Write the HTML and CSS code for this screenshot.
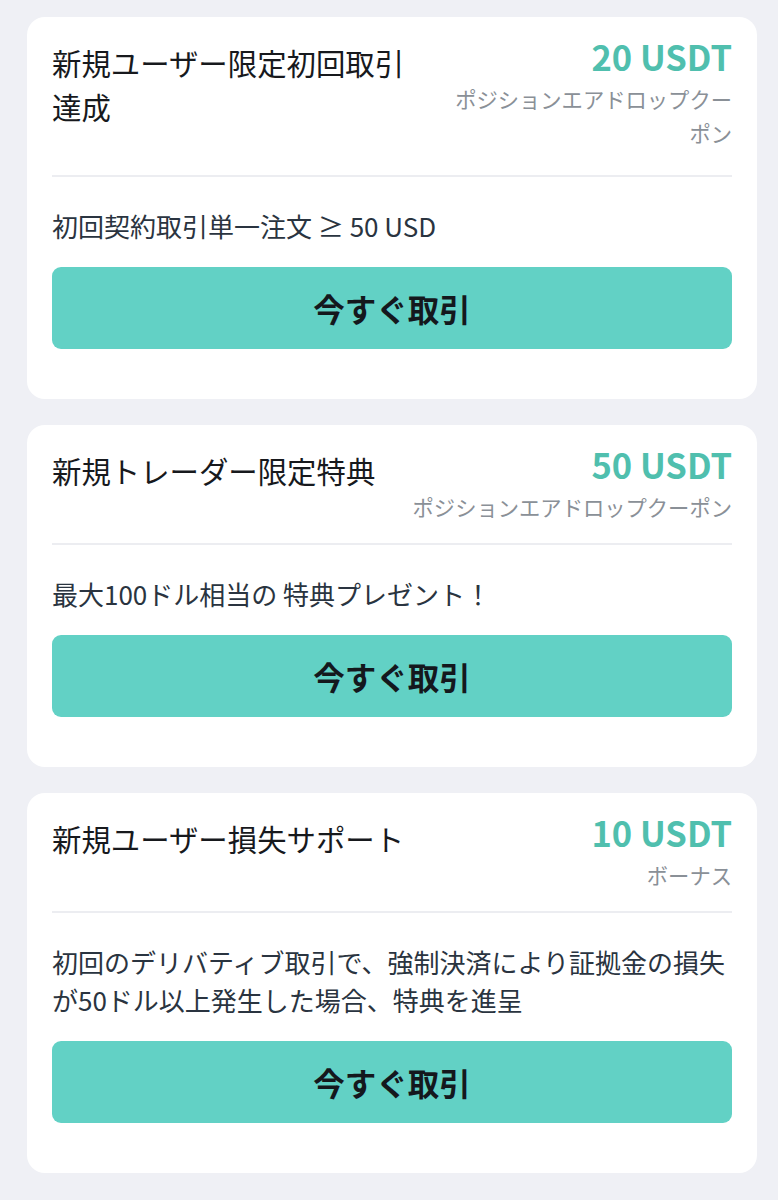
FILE: index.html
```html
<!DOCTYPE html>
<html lang="ja">
<head>
    <meta charset="UTF-8">
    <title>新規ユーザー特典</title>
    <meta name="viewport" content="width=device-width, initial-scale=1.0">
    <link rel="stylesheet" href="styles.css">
</head>
<body>
    <div class="reward-list">
        <div class="reward-card">
            <div class="reward-head reward-head--tall">
                <h2 class="reward-title">新規ユーザー限定初回取引達成</h2>
                <div class="reward-prize">
                    <div class="reward-amount">20 USDT</div>
                    <div class="reward-type">ポジションエアドロップクーポン</div>
                </div>
            </div>
            <p class="reward-desc">初回契約取引単一注文 ≥ 50 USD</p>
            <button class="trade-button">今すぐ取引</button>
        </div>

        <div class="reward-card">
            <div class="reward-head">
                <h2 class="reward-title">新規トレーダー限定特典</h2>
                <div class="reward-prize">
                    <div class="reward-amount">50 USDT</div>
                    <div class="reward-type">ポジションエアドロップクーポン</div>
                </div>
            </div>
            <p class="reward-desc">最大100ドル相当の 特典プレゼント！</p>
            <button class="trade-button">今すぐ取引</button>
        </div>

        <div class="reward-card">
            <div class="reward-head">
                <h2 class="reward-title">新規ユーザー損失サポート</h2>
                <div class="reward-prize">
                    <div class="reward-amount">10 USDT</div>
                    <div class="reward-type">ボーナス</div>
                </div>
            </div>
            <p class="reward-desc">初回のデリバティブ取引で、強制決済により証拠金の損失が50ドル以上発生した場合、特典を進呈</p>
            <button class="trade-button">今すぐ取引</button>
        </div>
    </div>
</body>
</html>
```

FILE: styles.css
```css
body {
    margin: 0;
    padding: 0;
    background-color: #eff0f5;
    font-family: "Noto Sans CJK JP", "Noto Sans", sans-serif;
}

.reward-list {
    display: flex;
    flex-direction: column;
    gap: 26px;
    padding: 17px 21px 20px 27px;
}

.reward-card {
    background: #ffffff;
    border-radius: 18px;
    padding: 16px 25px 50px;
}

.reward-head {
    display: flex;
    align-items: flex-start;
    gap: 20px;
    padding-bottom: 19px;
    border-bottom: 2px solid #ecedf1;
}

.reward-head--tall {
    padding-bottom: 25px;
}

.reward-title {
    flex: 1 1 auto;
    margin: 7px 0 0;
    font-size: 29.4px;
    line-height: 44px;
    font-weight: 400;
    color: #17191d;
}

.reward-prize {
    flex: 1 1 auto;
    text-align: right;
}

.reward-amount {
    font-size: 34.5px;
    line-height: 46px;
    font-weight: 700;
    color: #50bfae;
    white-space: nowrap;
}

.reward-type {
    margin-top: 3px;
    font-size: 21.3px;
    line-height: 34px;
    color: #8a9097;
}

.reward-desc {
    margin: 30px 0 0;
    font-size: 26px;
    line-height: 38px;
    color: #2a3440;
}

.trade-button {
    display: block;
    width: 100%;
    height: 82px;
    margin-top: 22px;
    border: none;
    border-radius: 9px;
    background-color: #62d1c5;
    color: #14181d;
    font-family: inherit;
    font-size: 31.5px;
    font-weight: 700;
    cursor: pointer;
}
```
